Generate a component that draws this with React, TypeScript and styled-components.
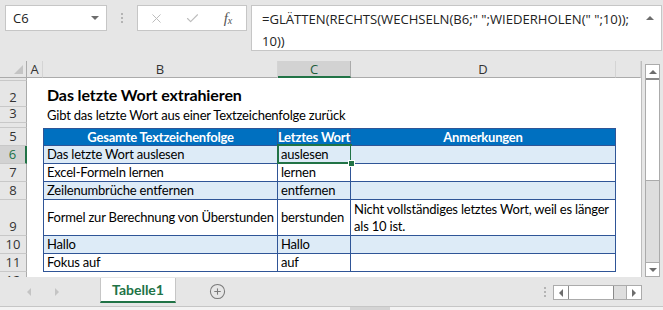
import React from 'react';
import styled, { createGlobalStyle } from 'styled-components';
import { X, Check, CirclePlus } from 'lucide-react';

const GlobalStyle = createGlobalStyle`
  html, body {
    margin: 0;
    padding: 0;
    background: #e6e6e6;
  }
  body {
    width: 663px;
    height: 310px;
    overflow: hidden;
    font-family: 'Open Sans', 'Liberation Sans', sans-serif;
  }
`;

type Row = {
  n: number;
  kind: 'blank' | 'title' | 'sub' | 'head' | 'data';
  text?: string;
  cells?: string[];
  band?: boolean;
  hideLabel?: boolean;
};

const rows: Row[] = [
  { n: 1, kind: 'blank' },
  { n: 2, kind: 'title', text: 'Das letzte Wort extrahieren' },
  { n: 3, kind: 'sub', text: 'Gibt das letzte Wort aus einer Textzeichenfolge zurück' },
  { n: 4, kind: 'blank', hideLabel: true },
  { n: 5, kind: 'head', cells: ['Gesamte Textzeichenfolge', 'Letztes Wort', 'Anmerkungen'] },
  { n: 6, kind: 'data', band: true, cells: ['Das letzte Wort auslesen', 'auslesen', ''] },
  { n: 7, kind: 'data', cells: ['Excel-Formeln lernen', 'lernen', ''] },
  { n: 8, kind: 'data', band: true, cells: ['Zeilenumbrüche entfernen', 'entfernen', ''] },
  {
    n: 9,
    kind: 'data',
    cells: [
      'Formel zur Berechnung von Überstunden',
      'berstunden',
      'Nicht vollständiges letztes Wort, weil es länger als 10 ist.',
    ],
  },
  { n: 10, kind: 'data', band: true, cells: ['Hallo', 'Hallo', ''] },
  { n: 11, kind: 'data', cells: ['Fokus auf', 'auf', ''] },
  { n: 12, kind: 'blank' },
];

const App = () => {
  return (
    <Window>
      <GlobalStyle />
      <FormulaBar>
        <NameBox>
          C6
          <DropCaret />
        </NameBox>
        <Grip>
          <Dot />
          <Dot />
          <Dot />
        </Grip>
        <FxBox>
          <FxButton>
            <X size={15} strokeWidth={1.6} color="#bdbdbd" />
          </FxButton>
          <FxButton>
            <Check size={15} strokeWidth={1.8} color="#bdbdbd" />
          </FxButton>
          <FxButton>
            <FxLabel>
              f<sub>x</sub>
            </FxLabel>
          </FxButton>
        </FxBox>
        <FormulaInput>
          <FormulaText>
            =GLÄTTEN(RECHTS(WECHSELN(B6;" ";WIEDERHOLEN(" ";10));
            <br />
            10))
          </FormulaText>
          <CollapseCaret />
        </FormulaInput>
      </FormulaBar>

      <SheetArea>
        <Grid>
          <Corner>
            <CornerMark />
          </Corner>
          <ColHead>A</ColHead>
          <ColHead>B</ColHead>
          <ColHead $active>C</ColHead>
          <ColHead>D</ColHead>
          <ColHead />

          {rows.map((r) => (
            <React.Fragment key={r.n}>
              <RowHead $active={r.n === 6}>{r.hideLabel ? '' : r.n}</RowHead>
              <SheetCell />
              {r.kind === 'blank' && (
                <>
                  <SheetCell />
                  <SheetCell />
                  <SheetCell />
                  <SheetCell />
                </>
              )}
              {r.kind === 'title' && <TitleCell>{r.text}</TitleCell>}
              {r.kind === 'sub' && <SubCell>{r.text}</SubCell>}
              {r.kind === 'head' && (
                <>
                  {r.cells!.map((c, i) => (
                    <HeadCell key={c} $first={i === 0}>
                      {c}
                    </HeadCell>
                  ))}
                  <SheetCell />
                </>
              )}
              {r.kind === 'data' && (
                <>
                  {r.cells!.map((c, i) => (
                    <DataCell
                      key={i}
                      $band={!!r.band}
                      $first={i === 0}
                      $selected={r.n === 6 && i === 1}
                    >
                      {c}
                    </DataCell>
                  ))}
                  <SheetCell />
                </>
              )}
            </React.Fragment>
          ))}
        </Grid>

        <VScroll>
          <ScrollButton>
            <TriUp />
          </ScrollButton>
          <VThumb />
          <VTrack />
          <ScrollButton $bottom>
            <TriDown />
          </ScrollButton>
        </VScroll>
      </SheetArea>

      <TabBar>
        <TabNav>
          <TriLeft $light />
          <TriRight $light />
        </TabNav>
        <SheetTab>Tabelle1</SheetTab>
        <AddSheet>
          <CirclePlus size={17} strokeWidth={1.5} color="#7a7a7a" />
        </AddSheet>
        <Spacer />
        <Grip $small>
          <Dot />
          <Dot />
          <Dot />
        </Grip>
        <HScroll>
          <HButton>
            <TriLeft />
          </HButton>
          <HThumb />
          <HTrack />
          <HButton>
            <TriRight />
          </HButton>
        </HScroll>
      </TabBar>
      <StatusStrip>
        <StatusMark />
      </StatusStrip>
    </Window>
  );
};

const Window = styled.div`
  width: 663px;
  height: 310px;
  display: flex;
  flex-direction: column;
  background: #e6e6e6;
  overflow: hidden;
`;

/* formula bar */
const FormulaBar = styled.div`
  height: 61px;
  box-sizing: border-box;
  padding: 5px 1px 0 5px;
  display: flex;
  align-items: flex-start;
`;
const NameBox = styled.div`
  width: 102px;
  height: 26px;
  box-sizing: border-box;
  background: #fff;
  border: 1px solid #c6c6c6;
  display: flex;
  align-items: center;
  justify-content: space-between;
  padding: 0 7px 0 7px;
  font-size: 13px;
  color: #222;
`;
const DropCaret = styled.span`
  width: 0;
  height: 0;
  border-left: 4px solid transparent;
  border-right: 4px solid transparent;
  border-top: 4px solid #6d6d6d;
`;
const Grip = styled.div<{ $small?: boolean }>`
  width: ${(p) => (p.$small ? '16px' : '30px')};
  height: ${(p) => (p.$small ? '29px' : '26px')};
  display: flex;
  flex-direction: column;
  align-items: center;
  justify-content: center;
  gap: 2px;
`;
const Dot = styled.span`
  width: 2px;
  height: 2px;
  background: #b4b4b4;
`;
const FxBox = styled.div`
  width: 110px;
  height: 26px;
  box-sizing: border-box;
  background: #fff;
  border: 1px solid #c6c6c6;
  display: grid;
  grid-template-columns: repeat(3, 36px);
`;
const FxButton = styled.div`
  display: flex;
  align-items: center;
  justify-content: center;
`;
const FxLabel = styled.span`
  font-family: 'Liberation Serif', serif;
  font-style: italic;
  font-size: 15px;
  color: #555;
  sub {
    font-size: 10px;
    vertical-align: -1px;
  }
`;
const FormulaInput = styled.div`
  margin-left: 4px;
  flex: 1;
  height: 46px;
  box-sizing: border-box;
  background: #fff;
  border: 1px solid #c6c6c6;
  display: flex;
  padding: 2px 7px 0 10px;
`;
const FormulaText = styled.div`
  flex: 1;
  font-size: 13.1px;
  line-height: 22px;
  color: #222;
  white-space: nowrap;
`;
const CollapseCaret = styled.span`
  margin-top: 8px;
  width: 0;
  height: 0;
  border-left: 4px solid transparent;
  border-right: 4px solid transparent;
  border-bottom: 4px solid #6d6d6d;
`;

/* sheet */
const SheetArea = styled.div`
  height: 216px;
  display: flex;
`;
const Grid = styled.div`
  display: grid;
  grid-template-columns: 27px 16px 235px 73px 265px 25px;
  grid-template-rows: 17px 3px 26px 16px 5px 18px 18px 18px 18px 36px 18px 18px 18px;
  height: 216px;
  overflow: hidden;
  background: #fff;
  border-right: 1px solid #bdbdbd;
  font-family: 'Lato', 'Liberation Sans', sans-serif;
  font-size: 13px;
  letter-spacing: -0.2px;
  color: #000;
`;
const Corner = styled.div`
  position: relative;
  background: #e6e6e6;
  border-right: 1px solid #ababab;
  border-bottom: 1px solid #ababab;
`;
const CornerMark = styled.span`
  position: absolute;
  right: 3px;
  bottom: 3px;
  width: 0;
  height: 0;
  border-left: 9px solid transparent;
  border-bottom: 9px solid #c4c4c4;
`;
const ColHead = styled.div<{ $active?: boolean }>`
  background: ${(p) => (p.$active ? '#d2d2d2' : '#e6e6e6')};
  border-right: 1px solid ${(p) => (p.$active ? '#ababab' : '#d4d4d4')};
  border-bottom: ${(p) => (p.$active ? '2px solid #217346' : '1px solid #ababab')};
  display: flex;
  align-items: center;
  justify-content: center;
  font-family: 'Open Sans', sans-serif;
  font-size: 13px;
  letter-spacing: 0;
  color: ${(p) => (p.$active ? '#1e5c3a' : '#333')};
`;
const RowHead = styled.div<{ $active?: boolean }>`
  background: ${(p) => (p.$active ? '#d2d2d2' : '#e6e6e6')};
  border-right: ${(p) => (p.$active ? '2px solid #217346' : '1px solid #ababab')};
  border-bottom: 1px solid #c8c8c8;
  overflow: hidden;
  display: flex;
  align-items: flex-end;
  justify-content: center;
  font-family: 'Open Sans', sans-serif;
  font-size: 13px;
  letter-spacing: 0;
  line-height: 17px;
  color: ${(p) => (p.$active ? '#217346' : '#333')};
`;
const SheetCell = styled.div``;
const TitleCell = styled.div`
  grid-column: span 4;
  display: flex;
  align-items: flex-end;
  padding: 0 0 3px 4px;
  font-weight: 700;
  font-size: 16px;
  letter-spacing: -0.1px;
  white-space: nowrap;
`;
const SubCell = styled.div`
  grid-column: span 4;
  display: flex;
  align-items: center;
  padding-left: 4px;
  white-space: nowrap;
`;
const HeadCell = styled.div<{ $first?: boolean }>`
  background: #0070c0;
  color: #fff;
  font-weight: 700;
  border-right: 1px solid #2f5597;
  border-bottom: 1px solid #2f5597;
  border-top: 1px solid #2f5597;
  ${(p) => p.$first && 'border-left: 1px solid #2f5597;'}
  display: flex;
  align-items: center;
  justify-content: center;
  white-space: nowrap;
  overflow: visible;
`;
const DataCell = styled.div<{ $band: boolean; $first?: boolean; $selected?: boolean }>`
  position: relative;
  background: ${(p) => (p.$band ? '#ddebf7' : '#fff')};
  border-right: 1px solid #2f5597;
  border-bottom: 1px solid #2f5597;
  ${(p) => p.$first && 'border-left: 1px solid #2f5597;'}
  display: flex;
  align-items: center;
  padding: 0 3px;
  line-height: 17px;
  ${(p) =>
    p.$selected &&
    `
    &::after {
      content: '';
      position: absolute;
      left: -1px;
      top: -2px;
      right: -2px;
      bottom: -1px;
      border: 2px solid #217346;
    }
    &::before {
      content: '';
      position: absolute;
      right: -5px;
      bottom: -4px;
      width: 5px;
      height: 5px;
      background: #217346;
      border: 1px solid #fff;
      z-index: 2;
    }
  `}
`;

/* vertical scrollbar */
const VScroll = styled.div`
  margin: 3px 2px 0 3px;
  width: 15px;
  height: 213px;
  box-sizing: border-box;
  border: 1px solid #ababab;
  display: flex;
  flex-direction: column;
  background: #dedede;
`;
const ScrollButton = styled.div<{ $bottom?: boolean }>`
  height: 13px;
  flex: none;
  background: #fff;
  display: flex;
  align-items: center;
  justify-content: center;
  ${(p) => p.$bottom && 'border-top: 1px solid #ababab;'}
`;
const VThumb = styled.div`
  height: 100px;
  flex: none;
  background: #fff;
  border-top: 2px solid #8a8a8a;
  border-bottom: 1px solid #ababab;
`;
const VTrack = styled.div`
  flex: 1;
`;
const TriUp = styled.span`
  border-left: 4px solid transparent;
  border-right: 4px solid transparent;
  border-bottom: 4px solid #6d6d6d;
`;
const TriDown = styled.span`
  border-left: 4px solid transparent;
  border-right: 4px solid transparent;
  border-top: 4px solid #6d6d6d;
`;
const TriLeft = styled.span<{ $light?: boolean }>`
  border-top: 4px solid transparent;
  border-bottom: 4px solid transparent;
  border-right: 4px solid ${(p) => (p.$light ? '#c4c4c4' : '#6d6d6d')};
`;
const TriRight = styled.span<{ $light?: boolean }>`
  border-top: 4px solid transparent;
  border-bottom: 4px solid transparent;
  border-left: 4px solid ${(p) => (p.$light ? '#c4c4c4' : '#6d6d6d')};
`;

/* sheet tabs */
const TabBar = styled.div`
  height: 29px;
  display: flex;
  align-items: flex-start;
  border-bottom: 1px solid #c6c6c6;
`;
const TabNav = styled.div`
  width: 100px;
  height: 29px;
  box-sizing: border-box;
  padding-left: 27px;
  display: flex;
  align-items: center;
  gap: 24px;
`;
const SheetTab = styled.div`
  width: 76px;
  height: 25px;
  box-sizing: border-box;
  background: #fff;
  border-left: 1px solid #c6c6c6;
  border-right: 1px solid #c6c6c6;
  border-bottom: 2px solid #217346;
  margin-top: 1px;
  display: flex;
  align-items: center;
  justify-content: center;
  font-family: 'Lato', 'Liberation Sans', sans-serif;
  font-weight: 700;
  font-size: 14px;
  color: #217346;
`;
const AddSheet = styled.div`
  margin: 6px 0 0 33px;
  display: flex;
`;
const Spacer = styled.div`
  flex: 1;
`;
const HScroll = styled.div`
  margin: 8px 21px 0 0;
  width: 89px;
  height: 15px;
  box-sizing: border-box;
  border: 1px solid #ababab;
  background: #dedede;
  display: flex;
`;
const HButton = styled.div`
  width: 14px;
  background: #fff;
  display: flex;
  align-items: center;
  justify-content: center;
  &:first-child {
    border-right: 1px solid #8a8a8a;
  }
  &:last-child {
    border-left: 1px solid #ababab;
  }
`;
const HThumb = styled.div`
  width: 44px;
  background: #fff;
  border-right: 1px solid #8a8a8a;
`;
const HTrack = styled.div`
  flex: 1;
`;
const StatusStrip = styled.div`
  flex: 1;
  background: #f3f3f3;
  padding-left: 350px;
`;
const StatusMark = styled.div`
  width: 40px;
  height: 100%;
  background: #d4d4d4;
`;

export default App;
